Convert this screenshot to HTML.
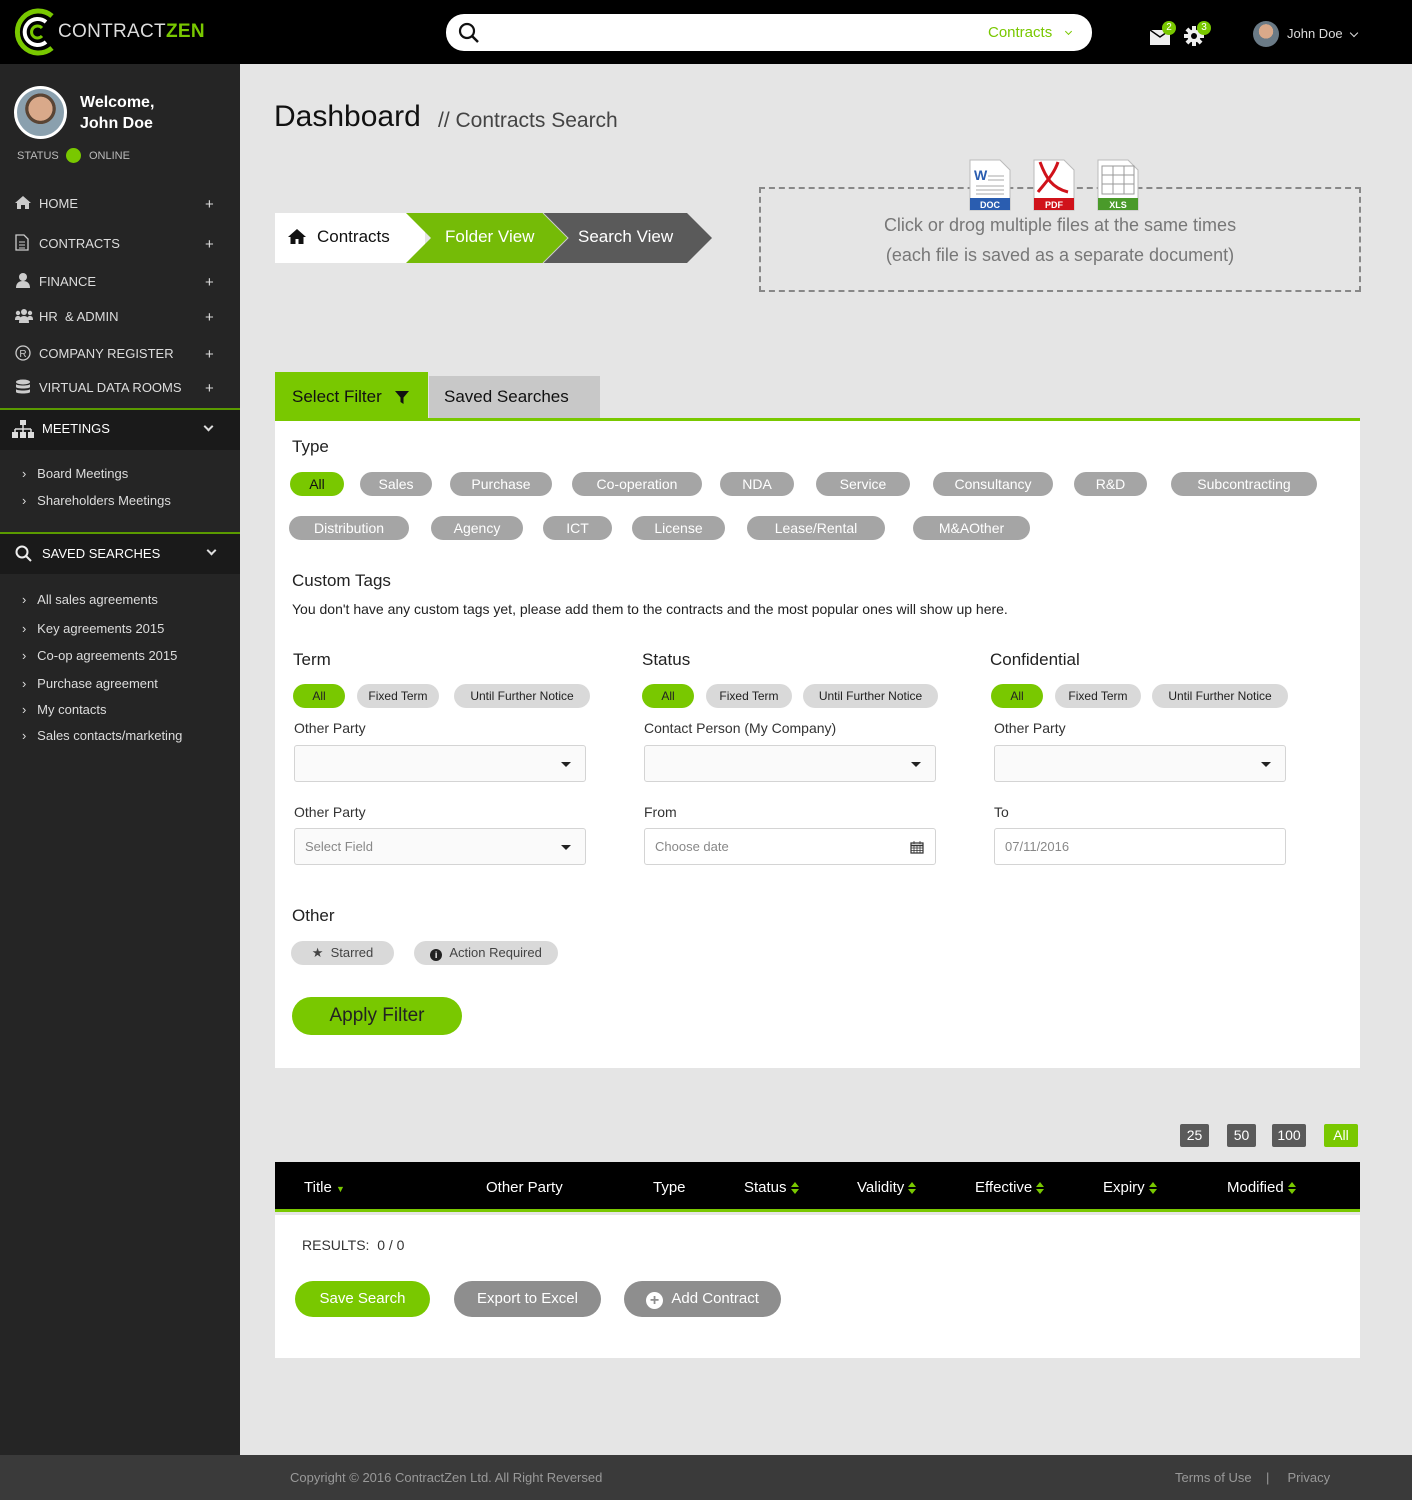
<!DOCTYPE html>
<html><head><meta charset="utf-8">
<style>
*{box-sizing:border-box;margin:0;padding:0}
body{width:1412px;height:1500px;position:relative;background:#e5e5e5;font-family:"Liberation Sans",sans-serif;overflow:hidden;color:#222}
.a{position:absolute}
.hdr{left:0;top:0;width:1412px;height:64px;background:#000}
.side{left:0;top:64px;width:240px;height:1391px;background:#252525}
.nav{left:0;width:240px;color:#ddd;font-size:13px}
.nav .t{position:absolute;left:39px}
.nav .p{position:absolute;left:205px;font-size:15px;color:#ddd}
.ni{position:absolute;left:15px}
.sub{color:#ddd;font-size:13px;left:22px}
.pill{position:absolute;height:24px;border-radius:12px;background:#a5a5a5;color:#fff;font-size:14px;text-align:center;line-height:24px}
.pill.g{background:#79c800;color:#111}
.sp{position:absolute;height:24px;border-radius:12px;background:#d9d9d9;color:#222;font-size:12px;text-align:center;line-height:24px}
.sp.g{background:#79c800}
.lbl{position:absolute;font-size:14px;color:#333}
.sel{position:absolute;width:292px;height:37px;border:1px solid #d4d4d4;border-radius:3px;background:#fafafa;font-size:13px;color:#888;padding-left:10px;line-height:35px}
.car{position:absolute;right:14px;top:16px;width:0;height:0;border-left:5px solid transparent;border-right:5px solid transparent;border-top:5px solid #222}
.th{position:absolute;top:1179px;color:#fff;font-size:15px}
.ud{display:inline-block;vertical-align:middle;margin-left:4px;width:8px;height:12px;position:relative}
.ud:before{content:"";position:absolute;left:0;top:0;border-left:4px solid transparent;border-right:4px solid transparent;border-bottom:5px solid #79c800}
.ud:after{content:"";position:absolute;left:0;top:7px;border-left:4px solid transparent;border-right:4px solid transparent;border-top:5px solid #79c800}
.btn{position:absolute;height:36px;border-radius:18px;color:#fff;font-size:15px;text-align:center;line-height:36px}
.pg{position:absolute;top:1124px;height:23px;background:#5a5a5a;color:#fff;border-radius:2px;font-size:14px;text-align:center;line-height:23px}
.chev{position:absolute;left:205px;width:7px;height:7px;border-right:2px solid #ddd;border-bottom:2px solid #ddd;transform:rotate(45deg)}
</style></head><body>
<div class="a hdr"></div>
<svg class="a" style="left:12px;top:8px" width="46" height="48" viewBox="0 0 46 48"><path d="M40 8 A21 21 0 1 0 40 40" fill="none" stroke="#79c800" stroke-width="5"/><path d="M34 14 A13 13 0 1 0 34 34" fill="none" stroke="#fff" stroke-width="4"/><path d="M30 20 A6 6 0 1 0 30 28" fill="none" stroke="#79c800" stroke-width="3"/></svg>
<div class="a" style="left:58px;top:21px;color:#ddd;font-size:19px;letter-spacing:0.3px">CONTRACT<b style="color:#79c800">ZEN</b></div>
<div class="a" style="left:446px;top:14px;width:646px;height:37px;background:#fff;border-radius:18px"></div>
<svg class="a" style="left:458px;top:22px" width="22" height="22" viewBox="0 0 22 22"><circle cx="9" cy="9" r="7" fill="none" stroke="#111" stroke-width="2.2"/><path d="M14 14l6 6" stroke="#111" stroke-width="2.5"/></svg>
<div class="a" style="left:988px;top:24px;color:#79c800;font-size:15px">Contracts</div>
<div class="a" style="left:1066px;top:29px;width:5px;height:5px;border-right:1px solid #79c800;border-bottom:1px solid #79c800;transform:rotate(45deg)"></div>
<svg class="a" style="left:1150px;top:29px" width="22" height="17" viewBox="0 0 22 17"><path d="M0 1h20v15H0z" fill="#eee"/><path d="M0 1l10 7 10-7" fill="none" stroke="#000" stroke-width="1.5"/></svg>
<div class="a" style="left:1162px;top:21px;width:14px;height:14px;border-radius:7px;background:#79c800;color:#fff;font-size:10px;text-align:center;line-height:14px">2</div>
<svg class="a" style="left:1184px;top:26px" width="20" height="20" viewBox="0 0 20 20"><g fill="#eee"><circle cx="10" cy="10" r="6.5"/><rect x="8" y="0" width="4" height="20"/><rect x="0" y="8" width="20" height="4"/><rect x="8" y="0" width="4" height="20" transform="rotate(45 10 10)"/><rect x="8" y="0" width="4" height="20" transform="rotate(-45 10 10)"/></g><circle cx="10" cy="10" r="3" fill="#000"/></svg>
<div class="a" style="left:1197px;top:21px;width:14px;height:14px;border-radius:7px;background:#79c800;color:#fff;font-size:10px;text-align:center;line-height:14px">3</div>
<div class="a" style="left:1253px;top:21px;width:26px;height:26px;border-radius:13px;background:radial-gradient(circle at 50% 40%,#d9a98a 0 35%,#6a7a86 36%)"></div>
<div class="a" style="left:1287px;top:26px;color:#ddd;font-size:13px">John Doe</div>
<div class="a" style="left:1351px;top:30px;width:6px;height:6px;border-right:1.5px solid #ddd;border-bottom:1.5px solid #ddd;transform:rotate(45deg)"></div>

<div class="a side"></div>
<div class="a" style="left:14px;top:86px;width:53px;height:53px;border-radius:27px;border:3px solid #fff;background:radial-gradient(circle at 50% 42%,#d9a98a 0 33%,#5a4535 34% 42%,#8aa0ae 43%)"></div>
<div class="a" style="left:80px;top:92px;color:#fff;font-size:16px;font-weight:bold;line-height:21px">Welcome,<br>John Doe</div>
<div class="a" style="left:17px;top:150px;color:#bbb;font-size:11px">STATUS</div>
<div class="a" style="left:66px;top:148px;width:15px;height:15px;border-radius:8px;background:#79c800"></div>
<div class="a" style="left:89px;top:150px;color:#bbb;font-size:11px">ONLINE</div>

<svg class="ni" style="top:195px" width="16" height="14" viewBox="0 0 16 14"><path d="M8 1L0 8h2v6h4V10h4v4h4V8h2z" fill="#ccc"/></svg>
<div class="a nav" style="top:196px"><span class="t">HOME</span><span class="p">+</span></div>
<svg class="ni" style="top:234px" width="14" height="17" viewBox="0 0 14 17"><path d="M1 1h8l4 4v11H1z" fill="none" stroke="#ccc" stroke-width="1.3"/><path d="M4 8h6M4 11h6M4 14h6" stroke="#ccc"/></svg>
<div class="a nav" style="top:236px"><span class="t">CONTRACTS</span><span class="p">+</span></div>
<svg class="ni" style="top:272px" width="16" height="16" viewBox="0 0 16 16"><circle cx="8" cy="5" r="4" fill="#ccc"/><path d="M1 16c0-5 3-7 7-7s7 2 7 7z" fill="#ccc"/></svg>
<div class="a nav" style="top:274px"><span class="t">FINANCE</span><span class="p">+</span></div>
<svg class="ni" style="top:308px" width="18" height="15" viewBox="0 0 18 15"><circle cx="9" cy="4" r="3" fill="#ccc"/><circle cx="3" cy="5" r="2.2" fill="#ccc"/><circle cx="15" cy="5" r="2.2" fill="#ccc"/><path d="M4 15c0-5 2-7 5-7s5 2 5 7zM0 12c0-3 1-4 3-4s3 1 3 4zM12 12c0-3 1-4 3-4s3 1 3 4z" fill="#ccc"/></svg>
<div class="a nav" style="top:309px"><span class="t">HR &nbsp;&amp; ADMIN</span><span class="p">+</span></div>
<svg class="ni" style="top:345px" width="16" height="16" viewBox="0 0 16 16"><circle cx="8" cy="8" r="7" fill="none" stroke="#ccc" stroke-width="1.3"/><text x="8" y="12" font-size="10" fill="#ccc" text-anchor="middle" font-family="Liberation Sans">R</text></svg>
<div class="a nav" style="top:346px"><span class="t">COMPANY REGISTER</span><span class="p">+</span></div>
<svg class="ni" style="top:379px" width="16" height="16" viewBox="0 0 16 16"><ellipse cx="8" cy="3" rx="7" ry="2.5" fill="#ccc"/><path d="M1 5c0 2 14 2 14 0v3c0 2-14 2-14 0zM1 10c0 2 14 2 14 0v3c0 2-14 2-14 0z" fill="#ccc"/></svg>
<div class="a nav" style="top:380px"><span class="t">VIRTUAL DATA ROOMS</span><span class="p">+</span></div>
<div class="a" style="left:0;top:408px;width:240px;height:2px;background:#5a9a00"></div>
<div class="a" style="left:0;top:410px;width:240px;height:40px;background:#1a1a1a"></div>
<svg class="a" style="left:12px;top:420px" width="22" height="18" viewBox="0 0 22 18"><rect x="8" y="0" width="6" height="5" fill="#ddd"/><path d="M11 5v4M3 9h16M3 9v3M11 9v3M19 9v3" stroke="#ddd" stroke-width="1.5" fill="none"/><rect x="0" y="12" width="6" height="6" fill="#ddd"/><rect x="8" y="12" width="6" height="6" fill="#ddd"/><rect x="16" y="12" width="6" height="6" fill="#ddd"/></svg>
<div class="a nav" style="top:421px;color:#fff"><span class="t" style="left:42px">MEETINGS</span></div>
<div class="chev" style="top:423px"></div>
<div class="a sub" style="top:466px">&#8250; &nbsp;&nbsp;Board Meetings</div>
<div class="a sub" style="top:493px">&#8250; &nbsp;&nbsp;Shareholders Meetings</div>
<div class="a" style="left:0;top:532px;width:240px;height:2px;background:#5a9a00"></div>
<div class="a" style="left:0;top:534px;width:240px;height:40px;background:#1a1a1a"></div>
<svg class="a" style="left:15px;top:545px" width="18" height="18" viewBox="0 0 18 18"><circle cx="7" cy="7" r="5.5" fill="none" stroke="#eee" stroke-width="2"/><path d="M11 11l5 5" stroke="#eee" stroke-width="2"/></svg>
<div class="a nav" style="top:546px;color:#fff"><span class="t" style="left:42px">SAVED SEARCHES</span></div>
<div class="chev" style="top:547px;left:208px"></div>
<div class="a sub" style="top:592px">&#8250; &nbsp;&nbsp;All sales agreements</div>
<div class="a sub" style="top:621px">&#8250; &nbsp;&nbsp;Key agreements 2015</div>
<div class="a sub" style="top:648px">&#8250; &nbsp;&nbsp;Co-op agreements 2015</div>
<div class="a sub" style="top:676px">&#8250; &nbsp;&nbsp;Purchase agreement</div>
<div class="a sub" style="top:702px">&#8250; &nbsp;&nbsp;My contacts</div>
<div class="a sub" style="top:728px">&#8250; &nbsp;&nbsp;Sales contacts/marketing</div>

<div class="a" style="left:274px;top:100px;font-size:30px;color:#111">Dashboard</div>
<div class="a" style="left:438px;top:109px;font-size:21px;color:#444">// Contracts Search</div>

<svg class="a" style="left:275px;top:213px" width="437" height="50" viewBox="0 0 437 50"><rect x="0" y="0" width="150" height="50" fill="#fff"/><path d="M131 0H270L295 25L270 50H131L156 25Z" fill="#75bb07"/><path d="M268 0H412L437 25L412 50H268L293 25Z" fill="#5a5a5a"/><path d="M268 0L293 25L268 50" fill="none" stroke="#ccc" stroke-width="1"/></svg>
<svg class="a" style="left:288px;top:228px" width="18" height="16" viewBox="0 0 18 16"><path d="M9 1L0 9h2.5v7h5v-5h3v5h5V9H18z" fill="#111"/></svg>
<div class="a" style="left:317px;top:227px;font-size:17px;color:#111">Contracts</div>
<div class="a" style="left:445px;top:227px;font-size:17px;color:#fff">Folder View</div>
<div class="a" style="left:578px;top:227px;font-size:17px;color:#fff">Search View</div>

<div class="a" style="left:759px;top:187px;width:602px;height:105px;border:2px dashed #888"></div>
<div class="a" style="left:759px;top:210px;width:602px;text-align:center;color:#777;font-size:18px;line-height:30px">Click or drog multiple files at the same times<br>(each file is saved as a separate document)</div>
<svg class="a" style="left:968px;top:158px" width="176" height="54" viewBox="0 0 176 54"><g><path d="M2 2h30l10 10v40H2z" fill="#fff" stroke="#bbb"/><rect x="2" y="40" width="40" height="12" fill="#2a5db0"/><text x="22" y="50" font-size="9" fill="#fff" text-anchor="middle" font-family="Liberation Sans" font-weight="bold">DOC</text><text x="6" y="22" font-size="14" fill="#2a5db0" font-weight="bold" font-family="Liberation Sans">W</text><path d="M8 28h28M8 32h28M8 36h28M20 18h16M20 22h16" stroke="#aaa"/></g><g transform="translate(64 0)"><path d="M2 2h30l10 10v40H2z" fill="#fff" stroke="#bbb"/><rect x="2" y="40" width="40" height="12" fill="#d0121a"/><text x="22" y="50" font-size="9" fill="#fff" text-anchor="middle" font-family="Liberation Sans" font-weight="bold">PDF</text><path d="M8 4C14 20 20 30 36 34M6 34C14 24 22 16 26 4" fill="none" stroke="#d0121a" stroke-width="3"/></g><g transform="translate(128 0)"><path d="M2 2h30l10 10v40H2z" fill="#fff" stroke="#bbb"/><rect x="2" y="40" width="40" height="12" fill="#4a9a2a"/><text x="22" y="50" font-size="9" fill="#fff" text-anchor="middle" font-family="Liberation Sans" font-weight="bold">XLS</text><path d="M6 8h32v28H6zM6 17h32M6 26h32M17 8v28M28 8v28" fill="none" stroke="#999"/></g></svg>

<div class="a" style="left:275px;top:372px;width:153px;height:48px;background:#79c800"></div>
<div class="a" style="left:292px;top:387px;font-size:17px;color:#111">Select Filter</div>
<svg class="a" style="left:395px;top:391px" width="14" height="14" viewBox="0 0 14 14"><path d="M0 0h14L8.5 6.5V13L5.5 11V6.5z" fill="#111"/></svg>
<div class="a" style="left:429px;top:376px;width:171px;height:44px;background:#c8c8c8"></div>
<div class="a" style="left:444px;top:387px;font-size:17px;color:#111">Saved Searches</div>
<div class="a" style="left:275px;top:418px;width:1085px;height:650px;background:#fff;border-top:3px solid #79c800"></div>

<div class="a" style="left:292px;top:437px;font-size:17px;color:#222">Type</div>
<div class="pill g" style="left:290px;top:472px;width:54px">All</div>
<div class="pill" style="left:360px;top:472px;width:72px">Sales</div>
<div class="pill" style="left:450px;top:472px;width:102px">Purchase</div>
<div class="pill" style="left:572px;top:472px;width:130px">Co-operation</div>
<div class="pill" style="left:720px;top:472px;width:74px">NDA</div>
<div class="pill" style="left:816px;top:472px;width:94px">Service</div>
<div class="pill" style="left:933px;top:472px;width:120px">Consultancy</div>
<div class="pill" style="left:1074px;top:472px;width:73px">R&amp;D</div>
<div class="pill" style="left:1171px;top:472px;width:146px">Subcontracting</div>
<div class="pill" style="left:289px;top:516px;width:120px">Distribution</div>
<div class="pill" style="left:431px;top:516px;width:92px">Agency</div>
<div class="pill" style="left:543px;top:516px;width:69px">ICT</div>
<div class="pill" style="left:632px;top:516px;width:93px">License</div>
<div class="pill" style="left:747px;top:516px;width:138px">Lease/Rental</div>
<div class="pill" style="left:913px;top:516px;width:117px">M&amp;AOther</div>

<div class="a" style="left:292px;top:571px;font-size:17px">Custom Tags</div>
<div class="a" style="left:292px;top:601px;font-size:14px;color:#222">You don't have any custom tags yet, please add them to the contracts and the most popular ones will show up here.</div>

<div class="a" style="left:293px;top:650px;font-size:17px">Term</div>
<div class="a" style="left:642px;top:650px;font-size:17px">Status</div>
<div class="a" style="left:990px;top:650px;font-size:17px">Confidential</div>
<div class="sp g" style="left:293px;top:684px;width:52px">All</div>
<div class="sp" style="left:357px;top:684px;width:82px">Fixed Term</div>
<div class="sp" style="left:454px;top:684px;width:136px">Until Further Notice</div>
<div class="sp g" style="left:642px;top:684px;width:52px">All</div>
<div class="sp" style="left:706px;top:684px;width:86px">Fixed Term</div>
<div class="sp" style="left:803px;top:684px;width:135px">Until Further Notice</div>
<div class="sp g" style="left:991px;top:684px;width:52px">All</div>
<div class="sp" style="left:1055px;top:684px;width:86px">Fixed Term</div>
<div class="sp" style="left:1152px;top:684px;width:136px">Until Further Notice</div>

<div class="lbl" style="left:294px;top:720px">Other Party</div>
<div class="lbl" style="left:644px;top:720px">Contact Person (My Company)</div>
<div class="lbl" style="left:994px;top:720px">Other Party</div>
<div class="sel" style="left:294px;top:745px"><span class="car"></span></div>
<div class="sel" style="left:644px;top:745px"><span class="car"></span></div>
<div class="sel" style="left:994px;top:745px"><span class="car"></span></div>
<div class="lbl" style="left:294px;top:804px">Other Party</div>
<div class="lbl" style="left:644px;top:804px">From</div>
<div class="lbl" style="left:994px;top:804px">To</div>
<div class="sel" style="left:294px;top:828px">Select Field<span class="car"></span></div>
<div class="sel" style="left:644px;top:828px;background:#fff">Choose date<svg style="position:absolute;right:11px;top:11px" width="14" height="14" viewBox="0 0 14 14"><path d="M1 3h12v10H1z" fill="none" stroke="#333" stroke-width="1.2"/><path d="M1 5.5h12" stroke="#333" stroke-width="1.5"/><path d="M4 1v3M10 1v3M1 8h12M1 10.5h12M4 5v8M7 5v8M10 5v8" stroke="#333" stroke-width="0.8"/></svg></div>
<div class="sel" style="left:994px;top:828px;background:#fff">07/11/2016</div>

<div class="a" style="left:292px;top:906px;font-size:17px">Other</div>
<div class="sp" style="left:291px;top:941px;width:103px;font-size:13px;color:#444">&#9733; &nbsp;Starred</div>
<div class="sp" style="left:414px;top:941px;width:144px;font-size:13px;color:#444"><span style="display:inline-block;width:12px;height:12px;border-radius:6px;background:#222;color:#fff;font-size:9px;line-height:12px;font-weight:bold;vertical-align:-1px">i</span> &nbsp;Action Required</div>
<div class="btn" style="left:292px;top:997px;width:170px;height:38px;line-height:38px;border-radius:19px;background:#79c800;color:#222;font-size:19px">Apply Filter</div>

<div class="pg" style="left:1180px;width:29px">25</div>
<div class="pg" style="left:1227px;width:29px">50</div>
<div class="pg" style="left:1272px;width:34px">100</div>
<div class="pg" style="left:1324px;width:34px;background:#79c800">All</div>

<div class="a" style="left:275px;top:1162px;width:1085px;height:50px;background:#000;border-bottom:3px solid #79c800"></div>
<div class="th" style="left:304px">Title <span style="color:#79c800;font-size:9px">&#9660;</span></div>
<div class="th" style="left:486px">Other Party</div>
<div class="th" style="left:653px">Type</div>
<div class="th" style="left:744px">Status<span class="ud"></span></div>
<div class="th" style="left:857px">Validity<span class="ud"></span></div>
<div class="th" style="left:975px">Effective<span class="ud"></span></div>
<div class="th" style="left:1103px">Expiry<span class="ud"></span></div>
<div class="th" style="left:1227px">Modified<span class="ud"></span></div>
<div class="a" style="left:275px;top:1215px;width:1085px;height:143px;background:#fff"></div>
<div class="a" style="left:302px;top:1237px;font-size:14px;color:#333">RESULTS: &nbsp;0 / 0</div>
<div class="btn" style="left:295px;top:1281px;width:135px;background:#79c800">Save Search</div>
<div class="btn" style="left:454px;top:1281px;width:147px;background:#8e8e8e">Export to Excel</div>
<div class="btn" style="left:624px;top:1281px;width:157px;background:#8e8e8e"><span style="display:inline-block;width:17px;height:17px;border-radius:9px;background:#fff;color:#8e8e8e;line-height:17px;font-weight:bold;font-size:16px;vertical-align:-2px">+</span> &nbsp;Add Contract</div>

<div class="a" style="left:0;top:1455px;width:1412px;height:45px;background:#3a3a3a"></div>
<div class="a" style="left:290px;top:1470px;color:#999;font-size:13px">Copyright © 2016 ContractZen Ltd. All Right Reversed</div>
<div class="a" style="left:1175px;top:1470px;color:#999;font-size:13px">Terms of Use &nbsp;&nbsp;&nbsp;| &nbsp;&nbsp;&nbsp;&nbsp;Privacy</div>
</body></html>
